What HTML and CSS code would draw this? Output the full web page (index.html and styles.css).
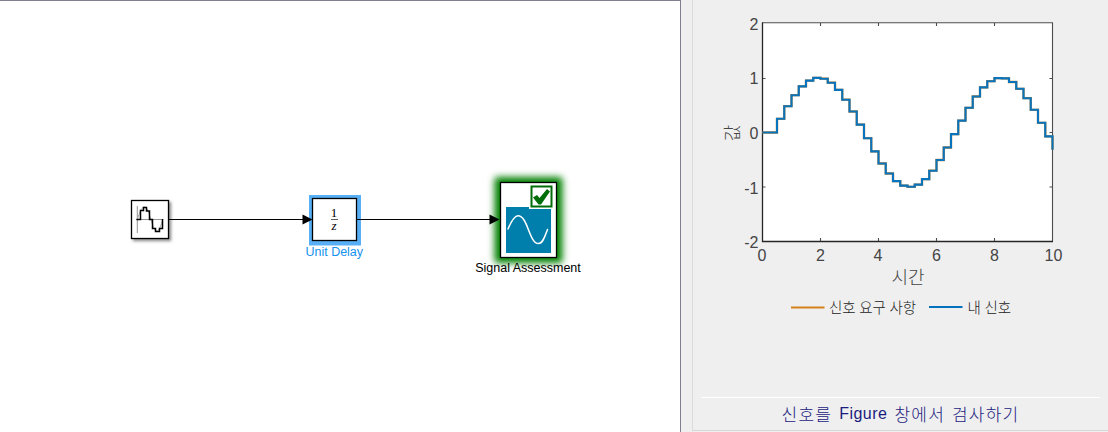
FILE: index.html
```html
<!DOCTYPE html>
<html lang="ko">
<head>
<meta charset="utf-8">
<title>Signal Assessment</title>
<link rel="stylesheet" href="styles.css">
</head>
<body>
<main class="workspace">
  <section class="model">
    <svg class="diagram" viewBox="0 1 680 431" width="680" height="431">
      <defs>
        <filter id="shadow" x="-30%" y="-30%" width="170%" height="170%"><feDropShadow dx="2" dy="2" stdDeviation="1.6" flood-color="#000" flood-opacity=".45"/></filter>
        <filter id="glow" x="-30%" y="-30%" width="160%" height="160%"><feGaussianBlur stdDeviation="3.7"/></filter>
      </defs>
      <rect class="block" x="131.500" y="200.500" width="37" height="38" filter="url(#shadow)"/>
      <path class="axis" d="M137.300 206V233M136 219.500H163"/>
      <path class="ideal" d="M137.500 219C140 211 142 206.500 145 207C149 207.500 151 224 155 230C158 234 160.500 227 163 219"/>
      <path class="sampled" d="M136.500 219.500H140.500V210.500H143.500V207.500H146.500V211H149.500V219.500H152.500V228.500H155.500V231.500H159.500V228.500H162.500V219"/>

      <rect class="selection" x="309" y="195" width="52" height="50.500"/>
      <rect class="block" x="312.500" y="198.500" width="44" height="42"/>
      <text class="math" x="334" y="216.500">1</text>
      <path class="fraction" d="M331 219.500H338"/>
      <text class="math math-italic" x="334" y="230">z</text>
      <text class="label label-selected" x="334.300" y="256" textLength="57.500">Unit Delay</text>

      <rect class="halo" x="494.500" y="177" width="68" height="86" rx="3" filter="url(#glow)"/>
      <rect class="block" x="500.500" y="182.500" width="56" height="75"/>
      <rect class="scope" x="506" y="207" width="45" height="46"/>
      <path class="scope-wave" d="M508 229C511 222 514 215.800 518 215.800C528 215.800 529 243.500 538.500 243.500C543 243.500 545 236 547.500 229.500"/>
      <rect class="badge-edge" x="529" y="184" width="25" height="25"/>
      <rect class="badge" x="531.500" y="186.500" width="20" height="20"/>
      <path class="check" d="M533 197.500L537 195L539.500 198L547 189L550 191.500L541 204.500H538.500Z"/>
      <text class="label" x="528" y="272" textLength="105.500">Signal Assessment</text>
      <path class="wire" d="M169 219.500H304M357 219.500H491"/>
      <path class="arrow" d="M302.500 214.500L312.500 219.500L302.500 224.500ZM489.500 214.500L499.500 219.500L489.500 224.500Z"/>
    </svg>
  </section>
  <aside class="panel">
    <div class="group">
      <svg class="chart" viewBox="693 0 415 397" width="415" height="397">
        <rect class="plot" x="762" y="22" width="291" height="220"/>
        <path class="frame" d="M762 22.700H1052.500V241.500"/>
        <path class="frame frame-main" d="M762.500 22.500V241.500H1053"/>
        <path class="frame" d="M820.500 23v3M878.500 23v3M936.500 23v3M994.500 23v3M820.500 241v-3M878.500 241v-3M936.500 241v-3M994.500 241v-3M763 78.500h2.500M763 132.500h2.500M763 187h2.500M1052 78.500h-2.500M1052 132.500h-2.500M1052 187h-2.500"/>
        <path class="requirement" d="M762.500 132.500H777V118.800H784.250V106.200H791.500V95.200H798.750V86.400H806V80.600H813.250V77.900H820.500V78.700H827.750V82.700H835V89.900H842.250V99.700H849.500V111.500H856.750V124.600H864V138.200H871.250V151.400H878.500V163.500H885.750V173.500H893V181.100H900.250V185.600H907.500V186.800H914.750V184.600H922V179.100H929.250V170.700H936.500V160H943.750V147.500H951V134.100H958.250V120.600H965.500V107.800H972.750V96.500H980V87.400H987.250V81.200H994.500V78.100H1001.750V78.400H1009V82H1016.250V88.800H1023.500V98.200H1030.750V109.800H1038V122.800H1045.250V136.400H1052.500V149.700"/>
        <path class="signal" d="M762.500 132.500H777V118.800H784.250V106.200H791.500V95.200H798.750V86.400H806V80.600H813.250V77.900H820.500V78.700H827.750V82.700H835V89.900H842.250V99.700H849.500V111.500H856.750V124.600H864V138.200H871.250V151.400H878.500V163.500H885.750V173.500H893V181.100H900.250V185.600H907.500V186.800H914.750V184.600H922V179.100H929.250V170.700H936.500V160H943.750V147.500H951V134.100H958.250V120.600H965.500V107.800H972.750V96.500H980V87.400H987.250V81.200H994.500V78.100H1001.750V78.400H1009V82H1016.250V88.800H1023.500V98.200H1030.750V109.800H1038V122.800H1045.250V136.400H1052.500V149.700"/>
        <g class="ticks ticks-y">
          <text x="758.500" y="30">2</text><text x="758.500" y="84">1</text><text x="758.500" y="138.500">0</text><text x="758.500" y="194">-1</text><text x="758.500" y="248">-2</text>
        </g>
        <g class="ticks">
          <text x="762" y="261">0</text><text x="820.500" y="261">2</text><text x="878" y="261">4</text><text x="936.500" y="261">6</text><text x="994.500" y="261">8</text><text x="1053.500" y="261">10</text>
        </g>
        <text class="axis-title" transform="translate(738.500 133) rotate(-90)" text-anchor="middle">값</text>
        <text class="axis-title" x="891.500" y="283.500" textLength="33">시간</text>
        <path class="legend-orange" d="M791 307.500H824.500"/>
        <text class="legend" x="829" y="312.500" textLength="87">신호 요구 사항</text>
        <path class="legend-blue" d="M929 307H962.500"/>
        <text class="legend" x="967.500" y="312.500" textLength="43.500">내 신호</text>
      </svg>
      <footer class="inspect"><a class="inspect-link"><span>신호를</span><span class="latin">Figure</span><span>창에서</span><span>검사하기</span></a></footer>
    </div>
  </aside>
</main>
</body>
</html>
```
FILE: styles.css
```css
* { box-sizing: border-box; }
body { margin: 0; background: #efefef; font-family: "Liberation Sans", "Noto Sans CJK KR", sans-serif; }
.workspace { display: flex; width: 1108px; height: 432px; overflow: hidden; }
.model { width: 681px; background: #fff; border-top: 1px solid #80808f; border-right: 1px solid #80808f; }
.diagram, .chart { display: block; }
.panel { flex: 1; padding-left: 11px; background: #efefef; }
.group { height: 431px; border-left: 1px solid #dadada; border-bottom: 1px solid #d7d7d7; }
.wire { stroke: #000; fill: none; }
.arrow { fill: #000; }
.block { fill: #fff; stroke: #000; stroke-width: 1.3; }
.axis { stroke: #777; fill: none; stroke-width: .8; }
.ideal { stroke: #aaa; fill: none; stroke-width: 1; }
.sampled { stroke: #000; fill: none; stroke-width: 1.5; }
.selection { fill: #58aff5; }
.math { font: 13px "Liberation Serif", serif; text-anchor: middle; }
.math-italic { font-style: italic; }
.fraction { stroke: #333; stroke-width: .8; }
.label { font-size: 12.5px; text-anchor: middle; fill: #000; }
.label-selected { fill: #1592ee; }
.halo { fill: #008000; }
.scope { fill: #007fad; }
.scope-wave { fill: none; stroke: #fff; stroke-width: 1.5; stroke-linecap: round; }
.badge-edge { fill: #fff; }
.badge { fill: #fff; stroke: #006d08; stroke-width: 2; }
.check { fill: #006d08; }
.plot { fill: #fff; }
.frame { fill: none; stroke: #4c4c4c; stroke-width: 1.1; }
.frame-main { stroke: #262626; stroke-width: 1.3; }
.requirement { fill: none; stroke: #d98a2b; stroke-width: 2.3; }
.signal { fill: none; stroke: #0874bd; stroke-width: 2.1; }
.ticks { font-size: 16px; fill: #454545; text-anchor: middle; }
.ticks-y { text-anchor: end; }
.axis-title { font-family: "Noto Sans CJK KR", sans-serif; font-size: 18px; font-weight: 300; fill: #444; }
.legend { font-family: "Noto Sans CJK KR", sans-serif; font-size: 14.5px; font-weight: 300; fill: #222; }
.legend-orange { stroke: #d5811b; stroke-width: 2; }
.legend-blue { stroke: #0072bd; stroke-width: 2; }
.inspect { margin: 0 8px; height: 32px; border-top: 1px solid #fff; display: flex; justify-content: center; align-items: center; }
.inspect-link { display: flex; gap: 7px; color: #1b1b80; font: 300 17px/24px "Noto Sans CJK KR", sans-serif; letter-spacing: 1.2px; white-space: nowrap; }
.latin { font-family: "Liberation Sans", sans-serif; font-size: 16px; letter-spacing: .5px; }
```
